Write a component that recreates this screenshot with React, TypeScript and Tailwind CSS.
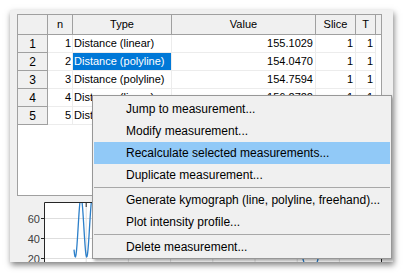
import React from "react";

type Row = { n: number; type: string; value: string; slice: number; t: number };

const rows: Row[] = [
  { n: 1, type: "Distance (linear)", value: "155.1029", slice: 1, t: 1 },
  { n: 2, type: "Distance (polyline)", value: "154.0470", slice: 1, t: 1 },
  { n: 3, type: "Distance (polyline)", value: "154.7594", slice: 1, t: 1 },
  { n: 4, type: "Distance (linear)", value: "156.2722", slice: 1, t: 1 },
  { n: 5, type: "Distance (linear)", value: "151.8812", slice: 1, t: 1 },
];

const menu: (string | null)[] = [
  "Jump to measurement...",
  "Modify measurement...",
  "Recalculate selected measurements...",
  "Duplicate measurement...",
  null,
  "Generate kymograph (line, polyline, freehand)...",
  "Plot intensity profile...",
  null,
  "Delete measurement...",
];

// plot wave: fast oscillation at the left, dip near the right edge
function wavePath() {
  const pts: string[] = [];
  for (let x = 64; x <= 270; x += 0.5) {
    const a = x < 90 ? 30 : 22;
    const y = 25 - a * Math.cos((2 * Math.PI * (x - 71)) / 11.4);
    pts.push(`${x.toFixed(1)},${y.toFixed(1)}`);
  }
  return (
    "M" + pts.join(" L") +
    " C276,30 290,40 293,57 C296,70 305,70 308,57 C310,44 316,30 324,30 L372,30"
  );
}

function Chart() {
  const grid = [1, 2, 3, 4, 5, 6, 7].map((i) => 34 + i * 42.2);
  return (
    <svg width="383" height="60" className="block shrink-0" style={{ fontFamily: "'Liberation Sans', Arial, sans-serif" }}>
      <defs>
        <clipPath id="plot">
          <rect x="34" y="0" width="337" height="60" />
        </clipPath>
      </defs>
      <rect x="34" y="0" width="337" height="60" fill="#ffffff" />
      {[16.5, 36.5, 56.5].map((y) => (
        <line key={y} x1="34" x2="371" y1={y} y2={y} stroke="#dedede" />
      ))}
      {grid.map((x) => (
        <line key={x} x1={x} x2={x} y1="0" y2="60" stroke="#dedede" />
      ))}
      {grid.map((x) => (
        <line key={"t" + x} x1={x} x2={x} y1="0" y2="5" stroke="#262626" />
      ))}
      <path d={wavePath()} fill="none" stroke="#2c7fc9" strokeWidth="1.3" clipPath="url(#plot)" />
      <path d="M34.5,60 V0.5 H371.5 V60" fill="none" stroke="#262626" />
      {[
        { y: 16.5, l: "60" },
        { y: 36.5, l: "40" },
        { y: 56.5, l: "20" },
      ].map((t) => (
        <g key={t.l}>
          <line x1="31" x2="34" y1={t.y} y2={t.y} stroke="#262626" />
          <line x1="367" x2="371" y1={t.y} y2={t.y} stroke="#262626" />
          <text x="30" y={t.y + 4} textAnchor="end" fontSize="11" fill="#404040">
            {t.l}
          </text>
        </g>
      ))}
    </svg>
  );
}

function Table() {
  const hd = "h-[20px] border-r border-b border-[#a0a0a0] bg-[#f0f0f0] flex items-center justify-center shrink-0";
  const cell = "h-[18px] border-r border-b border-[#ececec] bg-white flex items-center shrink-0 overflow-hidden whitespace-nowrap";
  return (
    <div className="ml-[7px] mt-[4px] w-[365px] h-[183px] border border-[#a0a0a0] bg-white text-[11px] text-black flex flex-col">
      <div className="flex">
        <div className={`${hd} w-[30px]`} />
        <div className={`${hd} w-[25px]`}>n</div>
        <div className={`${hd} w-[99px]`}>Type</div>
        <div className={`${hd} w-[144px]`}>Value</div>
        <div className={`${hd} w-[40px]`}>Slice</div>
        <div className={`${hd} w-[20px]`}>T</div>
        <div className={`${hd} flex-1 border-r-0`} />
      </div>
      {rows.map((r) => (
        <div key={r.n} className="flex">
          <div className="h-[18px] w-[30px] border-r border-b border-[#a0a0a0] bg-[#f0f0f0] flex items-center justify-center text-[12px] shrink-0">
            {r.n}
          </div>
          <div className={`${cell} w-[25px] justify-end pr-[1px]`}>{r.n}</div>
          <div className={`${cell} w-[99px] pl-[1px] ${r.n === 2 ? "!bg-[#0078d7] text-white" : ""}`}>{r.type}</div>
          <div className={`${cell} w-[144px] justify-end pr-[2px]`}>{r.value}</div>
          <div className={`${cell} w-[40px] justify-end pr-[2px]`}>{r.slice}</div>
          <div className={`${cell} w-[20px] justify-end pr-[2px]`}>{r.t}</div>
          <div className="h-[18px] flex-1 bg-white" />
        </div>
      ))}
    </div>
  );
}

function ContextMenu() {
  return (
    <div className="absolute left-[82px] top-[85px] w-[300px] h-[164px] border border-[#979797] bg-[#f0f0f0] shadow-[2px_2px_3px_rgba(0,0,0,0.35)] py-[2px] text-[12px] text-black">
      {menu.map((m, i) =>
        m === null ? (
          <div key={i} className="h-[3px] flex items-center mx-[1px]">
            <div className="h-px w-full bg-[#a8a8a8]" />
          </div>
        ) : (
          <div
            key={i}
            className={`h-[22px] mx-[1px] pl-[32px] flex items-center whitespace-nowrap ${
              i === 2 ? "bg-[#91c9f7]" : ""
            }`}
          >
            {m}
          </div>
        )
      )}
    </div>
  );
}

export default function App() {
  return (
    <div className="w-[405px] h-[273px] bg-white pl-[10px] pt-[10px]" style={{ fontFamily: "'Liberation Sans', Arial, sans-serif" }}>
      <div className="relative w-[383px] h-[252px] bg-[#f0f0f0] shadow-[1px_3px_6px_rgba(0,0,0,0.5)] overflow-hidden flex flex-col">
        <Table />
        <div className="mt-[6px]">
          <Chart />
        </div>
        <ContextMenu />
      </div>
    </div>
  );
}
